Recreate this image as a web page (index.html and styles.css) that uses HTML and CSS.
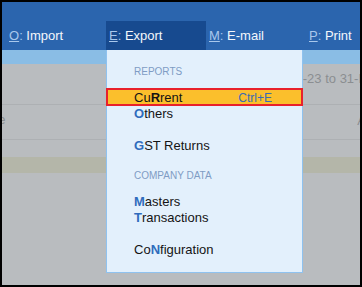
FILE: index.html
```html
<!DOCTYPE html>
<html>
<head>
<meta charset="utf-8">
<link rel="stylesheet" href="styles.css">
</head>
<body>
<div class="screen">
  <nav class="menubar">
    <div class="mi"><span class="hk"><u>O</u>:</span> Import</div>
    <div class="mi active"><span class="hk"><u>E</u>:</span> Export</div>
    <div class="mi"><span class="hk"><u>M</u>:</span> E-mail</div>
    <div class="mi"><span class="hk"><u>P</u>:</span> Print</div>
  </nav>
  <div class="content">
    <div class="strip"></div>
    <div class="period">1-Apr-23 to 31-Mar-24</div>
    <div class="row2"><span class="lefttext">Date</span><span class="righttext">A</span></div>
    <div class="row3"></div>
    <div class="band"></div>
  </div>
  <div class="dropdown">
    <div class="section first">REPORTS</div>
    <div class="item selected"><span>Cu<b class="k0">R</b>rent</span><span class="shortcut">Ctrl+E</span></div>
    <div class="item"><b class="k">O</b>thers</div>
    <div class="item blank"></div>
    <div class="item"><b class="k">G</b>ST Returns</div>
    <div class="section second">COMPANY DATA</div>
    <div class="item"><b class="k">M</b>asters</div>
    <div class="item"><b class="k">T</b>ransactions</div>
    <div class="item blank"></div>
    <div class="item">Co<b class="k">N</b>figuration</div>
  </div>
</div>
</body>
</html>
```
FILE: styles.css
```css
html, body {
  margin: 0;
  padding: 0;
}
body {
  font-family: "Liberation Sans", Arial, sans-serif;
  font-size: 13px;
}
.screen {
  position: relative;
  width: 362px;
  height: 287px;
  box-sizing: border-box;
  border: 2px solid #000;
  background: #b9bcbf;
  overflow: hidden;
}
.menubar {
  display: flex;
  align-items: flex-end;
  height: 48px;
  background: #2b65ae;
  padding-left: 4px;
  overflow: hidden;
}
.mi {
  flex: 0 0 100px;
  width: 100px;
  box-sizing: border-box;
  height: 29px;
  line-height: 29px;
  padding-left: 3px;
  color: #f4f7fc;
  white-space: nowrap;
}
.mi.active {
  background: #174a8f;
}
.hk {
  color: #a9c8ec;
}
.hk u {
  text-decoration: underline;
  text-decoration-color: #a9c8ec;
}
.content {
  display: flex;
  flex-direction: column;
}
.strip {
  height: 14px;
  background: #8abde5;
}
.period {
  height: 41px;
  box-sizing: border-box;
  border-bottom: 1px solid #adb0b3;
  padding-left: 269px;
  padding-top: 7px;
  line-height: 16px;
  font-size: 13px;
  color: #8b8e91;
  white-space: nowrap;
}
.row2 {
  height: 35px;
  box-sizing: border-box;
  border-bottom: 1px solid #adb0b3;
  display: flex;
  justify-content: space-between;
  align-items: center;
  color: #8b8e91;
  font-size: 13px;
  white-space: nowrap;
}
.lefttext {
  margin-left: -24px;
  padding-bottom: 6px;
}
.righttext {
  margin-right: -6px;
  padding-bottom: 4px;
}
.row3 {
  height: 17px;
}
.band {
  height: 16px;
  background: #b4b6a9;
}
.dropdown {
  position: absolute;
  left: 104px;
  top: 48px;
  width: 197px;
  height: 223px;
  box-sizing: border-box;
  background: #e3f0fc;
  border: 1px solid #8fc2ef;
  border-top: 0;
  display: flex;
  flex-direction: column;
}
.section {
  font-size: 10px;
  line-height: 16px;
  color: #7f9cc4;
  padding-left: 27px;
}
.section.first {
  padding-top: 14px;
  padding-bottom: 8px;
}
.section.second {
  padding-top: 14px;
  padding-bottom: 10px;
}
.item {
  height: 16px;
  line-height: 16px;
  padding-left: 27px;
  color: #141414;
  white-space: nowrap;
}
.item b {
  font-weight: bold;
}
.k {
  color: #2f6cbd;
}
.k0 {
  color: #141414;
}
.item.selected {
  display: flex;
  justify-content: space-between;
  height: 14px;
  margin: 0 -1px;
  padding-left: 26px;
  padding-right: 29px;
  background: #fbbf2c;
  border: 2px solid #e8212b;
}
.shortcut {
  font-size: 12px;
  color: #3b6bb3;
}
```
